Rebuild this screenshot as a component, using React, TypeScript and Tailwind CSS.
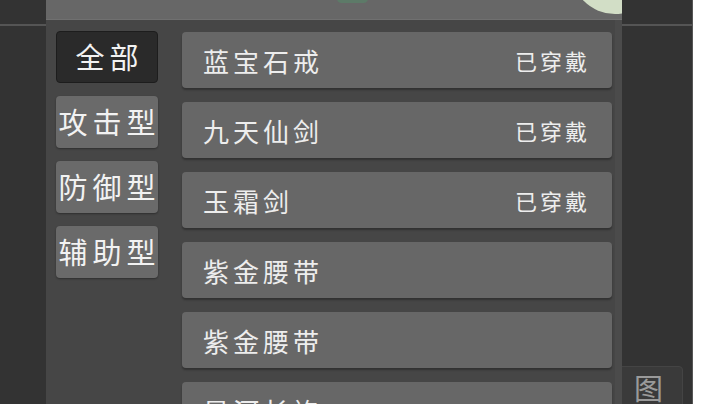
import React from "react";

type Item = { name: string; worn: boolean };

const tabs = ["全部", "攻击型", "防御型", "辅助型"];

const items: Item[] = [
  { name: "蓝宝石戒", worn: true },
  { name: "九天仙剑", worn: true },
  { name: "玉霜剑", worn: true },
  { name: "紫金腰带", worn: false },
  { name: "紫金腰带", worn: false },
  { name: "星河长袍", worn: false },
];

const font = { fontFamily: '"Noto Sans CJK SC", "Noto Sans", sans-serif' };

export default function App() {
  return (
    <div
      className="relative flex h-[404px] w-[720px] overflow-hidden bg-white"
      style={font}
    >
      {/* left backdrop */}
      <div className="w-[46px] shrink-0 bg-[#333333]">
        <div className="mt-[24px] h-[2px] bg-[#555555]" />
      </div>

      {/* panel */}
      <div className="relative z-10 flex w-[576px] shrink-0 flex-col bg-[#464646]">
        <div className="relative h-[20px] overflow-hidden border-b border-[#707070] bg-[#676767]">
          <div className="absolute left-[291px] top-[-6px] h-[9px] w-[31px] rounded-full bg-[#5d7a68]" />
          <div className="absolute left-[525px] top-[-74px] h-[88px] w-[88px] rounded-full bg-[#d2dec6]" />
        </div>

        <div className="flex flex-1 overflow-hidden">
          {/* category tabs */}
          <div className="ml-[10px] flex w-[102px] shrink-0 flex-col gap-[13px] pt-[11px]">
            {tabs.map((t, i) => (
              <div
                key={t}
                className={
                  i === 0
                    ? "flex h-[52px] items-center justify-center whitespace-nowrap rounded-[4px] border border-[#1d1d1d] bg-[#2a2a2a] pl-[5px] text-[29px] tracking-[5px] text-[#f2f2f2]"
                    : "flex h-[52px] items-center justify-center whitespace-nowrap rounded-[4px] bg-[#6a6a6a] pl-[5px] text-[29px] tracking-[5px] text-[#f2f2f2] shadow-[0_1px_2px_rgba(0,0,0,0.35)]"
                }
              >
                {t}
              </div>
            ))}
          </div>

          {/* item list */}
          <div className="ml-[24px] flex w-[430px] shrink-0 flex-col gap-[14px] pt-[12px]">
            {items.map((it, i) => (
              <div
                key={i}
                className="flex h-[56px] shrink-0 items-center justify-between rounded-[4px] bg-[#676767] pl-[21px] pr-[22px] text-[#ededed] shadow-[0_2px_2px_rgba(0,0,0,0.3)]"
              >
                <span className="text-[26px] tracking-[4px]">{it.name}</span>
                {it.worn && (
                  <span className="text-[22px] tracking-[3px]">已穿戴</span>
                )}
              </div>
            ))}
          </div>

          <div className="ml-[3px] w-[7px] bg-[#4b4b4b]" />
        </div>
      </div>

      {/* right backdrop */}
      <div className="relative w-[71px] shrink-0 border-r border-[#555555] bg-[#333333]">
        <div className="mt-[24px] h-[2px] bg-[#555555]" />
        <div className="absolute left-[-4px] top-[366px] flex h-[42px] w-[65px] items-start justify-end rounded-tr-[4px] border border-[#444444] bg-[#3a3a3a] pr-[19px] text-[29px] leading-[40px] text-[#9a9a9a]">
          图
        </div>
      </div>

      <div className="flex-1 bg-white" />
    </div>
  );
}
